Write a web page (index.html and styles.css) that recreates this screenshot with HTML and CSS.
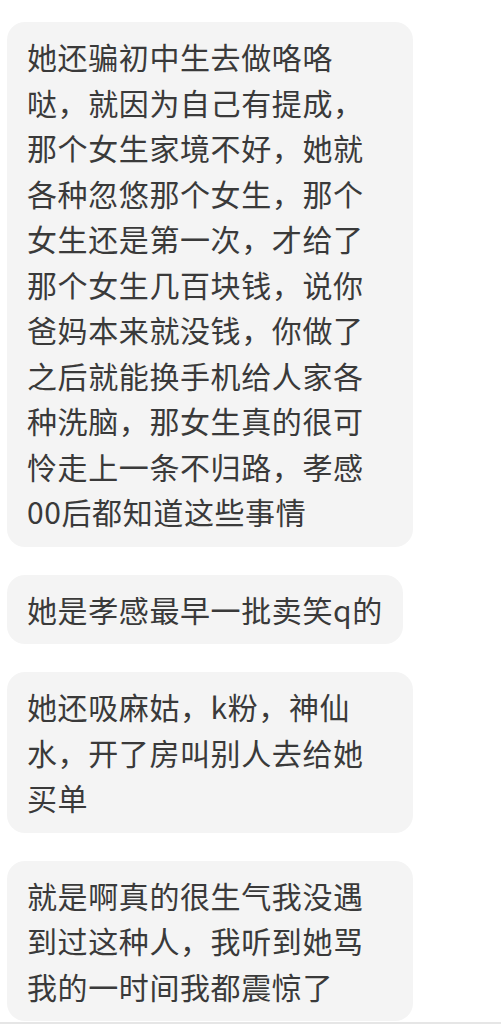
FILE: index.html
```html
<!DOCTYPE html>
<html lang="zh-CN">
  <head>
    <meta charset="UTF-8" />
    <title>聊天记录</title>
    <link rel="stylesheet" href="styles.css">
  </head>

  <body>
    <div class="chat">
      <!-- 对方的消息 -->
      <div class="msg">她还骗初中生去做咯咯哒，就因为自己有提成，那个女生家境不好，她就各种忽悠那个女生，那个女生还是第一次，才给了那个女生几百块钱，说你爸妈本来就没钱，你做了之后就能换手机给人家各种洗脑，那女生真的很可怜走上一条不归路，孝感00后都知道这些事情</div>
      <div class="msg">她是孝感最早一批卖笑q的</div>
      <div class="msg">她还吸麻姑，k粉，神仙水，开了房叫别人去给她买单</div>
      <div class="msg">就是啊真的很生气我没遇到过这种人，我听到她骂我的一时间我都震惊了</div>
    </div>
    <div class="bottom-line"></div>
  </body>
</html>
```

FILE: styles.css
```css
html,
body {
  margin: 0;
  background-color: #ffffff;
}

body {
  font-family: "Noto Sans CJK SC", "Noto Sans", sans-serif;
  color: #3a3a3a;
  height: 1024px;
  display: flex;
  flex-direction: column;
}

.chat {
  flex: 1;
  display: flex;
  flex-direction: column;
  align-items: flex-start;
  gap: 28px;
  padding: 22px 0 0 7px;
}

/* 气泡 */
.msg {
  box-sizing: border-box;
  max-width: 406px;
  padding: 12px 20px;
  background-color: #f4f4f4;
  border-radius: 18px;
  font-size: 30px;
  line-height: 45.5px;
  letter-spacing: 0.6px;
  overflow-wrap: anywhere;
}

.bottom-line {
  height: 2px;
  background-color: #e6e6e6;
}
```
